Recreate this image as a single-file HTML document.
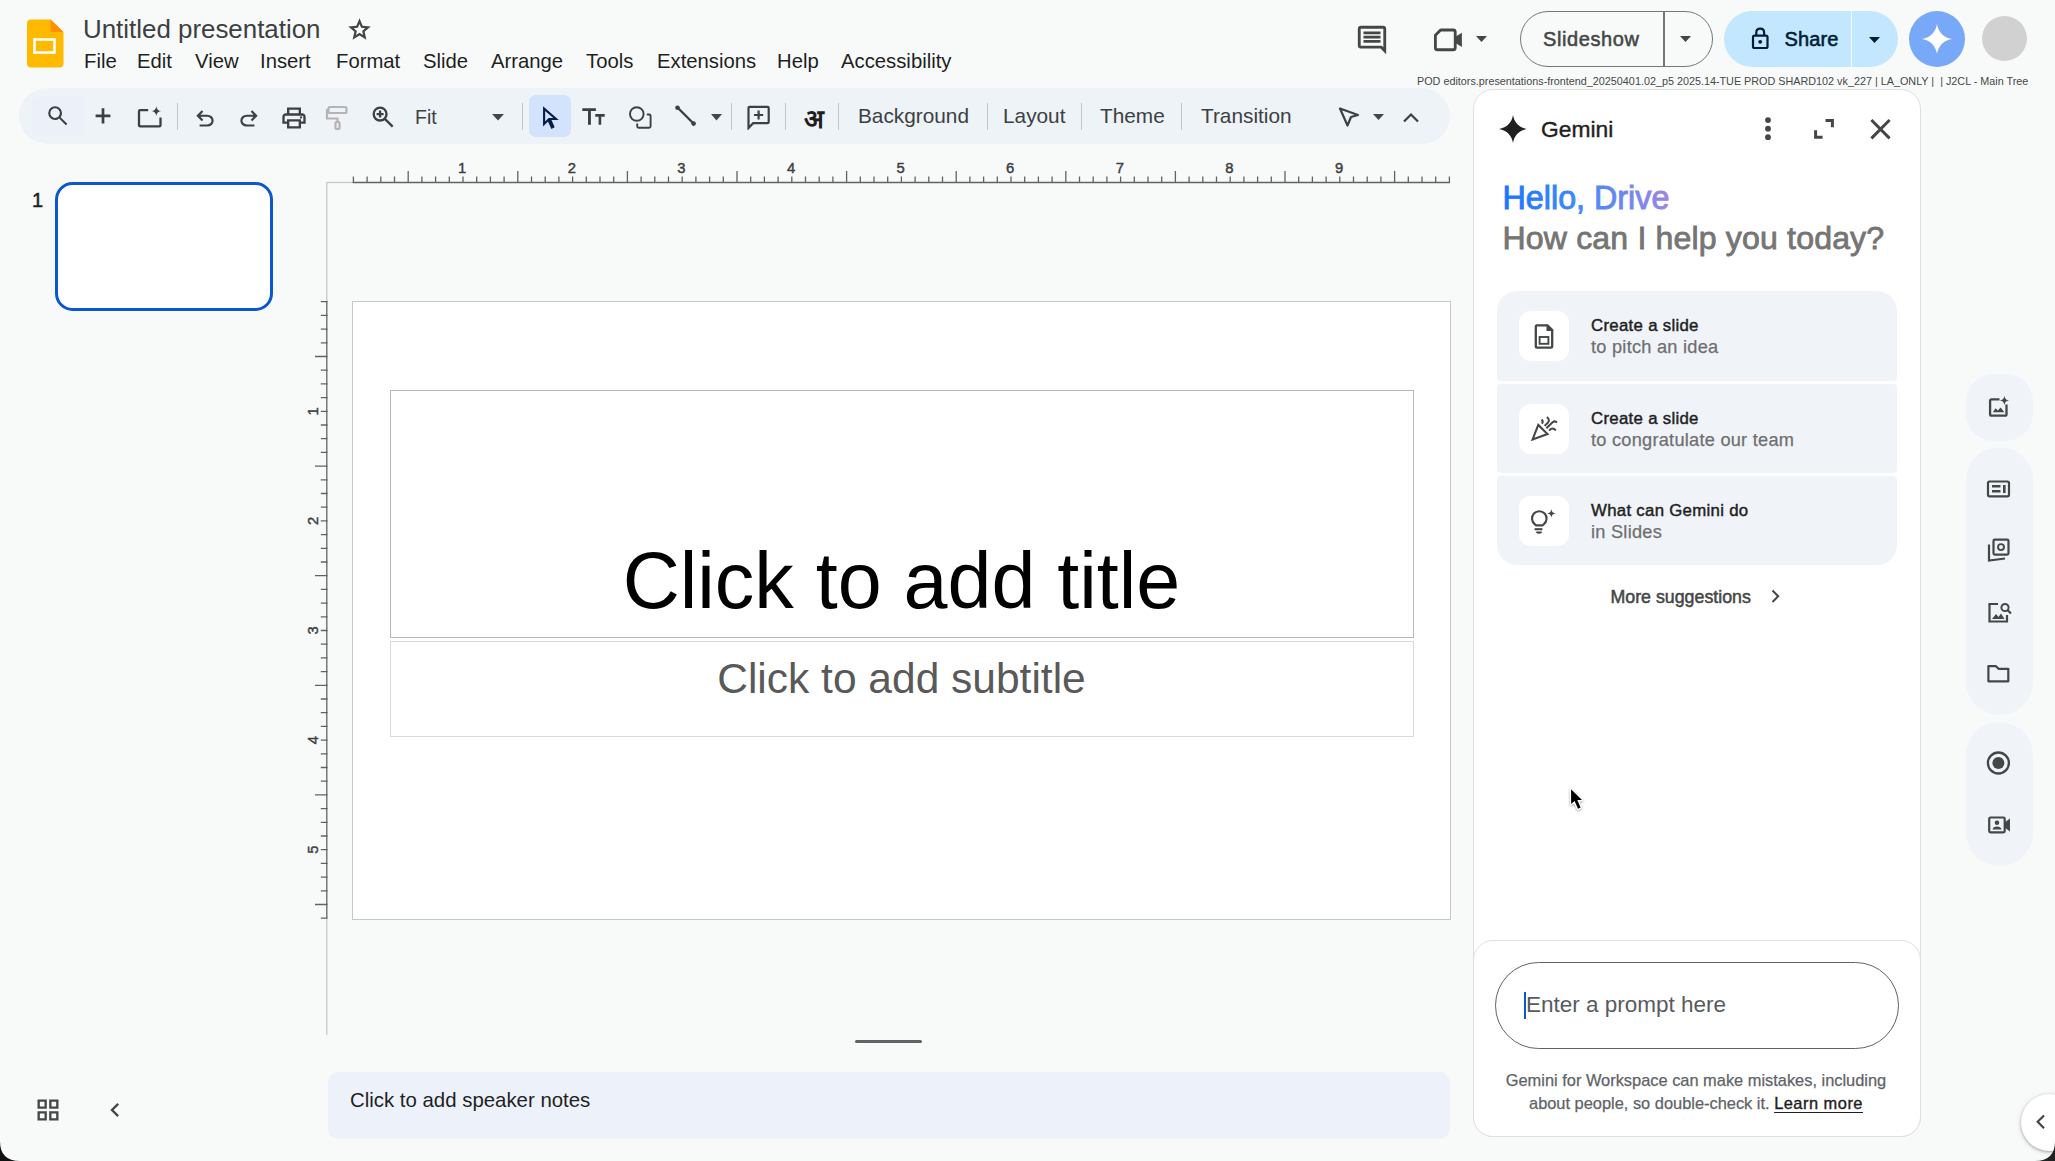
<!DOCTYPE html>
<html><head><meta charset="utf-8">
<style>
html,body{margin:0;padding:0;}
body{width:2055px;height:1161px;overflow:hidden;position:relative;background:#f8faf9;font-family:"Liberation Sans",sans-serif;color:#1f1f1f;}
.a{position:absolute;}
.t{position:absolute;white-space:nowrap;line-height:1;}
svg{position:absolute;display:block;}
.sep{position:absolute;width:1.3px;height:27px;top:103px;background:#c4c7c5;}
</style></head><body>

<!-- ===== HEADER ===== -->
<svg style="left:27px;top:19px" width="37" height="49" viewBox="0 0 37 49">
  <path d="M4 0.5H23.5L36.5 13V44.5Q36.5 48.5 32.5 48.5H4Q0 48.5 0 44.5V4.5Q0 0.5 4 0.5Z" fill="#ffba00"/>
  <path d="M23.5 0.5L36.5 13H23.5Z" fill="#ff8f00"/>
  <rect x="7.5" y="20.5" width="20" height="13" fill="none" stroke="#fff" stroke-width="2.6"/>
</svg>
<div class="t" id="title" style="left:83px;top:17px;font-size:25.9px;color:#3c4043;">Untitled presentation</div>
<svg style="left:346px;top:16px" width="27" height="27" viewBox="0 -960 960 960"><path fill="#444746" d="m354-287 126-76 126 77-33-144 111-96-146-13-58-136-58 135-146 13 111 97-33 143ZM233-120l65-281L80-590l288-25 112-265 112 265 288 25-218 189 65 281-247-149-247 149Zm247-350Z"/></svg>

<div class="t" style="left:84px;top:51px;font-size:20.3px;">File</div>
<div class="t" style="left:137px;top:51px;font-size:20.3px;">Edit</div>
<div class="t" style="left:195px;top:51px;font-size:20.3px;">View</div>
<div class="t" style="left:260px;top:51px;font-size:20.3px;">Insert</div>
<div class="t" style="left:336px;top:51px;font-size:20.3px;">Format</div>
<div class="t" style="left:423px;top:51px;font-size:20.3px;">Slide</div>
<div class="t" style="left:491px;top:51px;font-size:20.3px;">Arrange</div>
<div class="t" style="left:586px;top:51px;font-size:20.3px;">Tools</div>
<div class="t" style="left:657px;top:51px;font-size:20.3px;">Extensions</div>
<div class="t" style="left:777px;top:51px;font-size:20.3px;">Help</div>
<div class="t" style="left:841px;top:51px;font-size:20.3px;">Accessibility</div>

<!-- top right -->
<svg style="left:1355px;top:23px" width="34" height="34" viewBox="0 0 24 24"><path fill="#444746" d="M22 4c0-1.1-.9-2-2-2H4c-1.1 0-2 .9-2 2v12c0 1.1.9 2 2 2h14l4 4V4zm-2 13.17L18.83 16H4V4h16v13.17zM6 12h12v2H6zm0-3h12v2H6zm0-3h12v2H6z"/></svg>
<svg style="left:1431px;top:22px" width="34" height="34" viewBox="0 0 24 24"><path fill="none" stroke="#444746" stroke-width="2" stroke-linejoin="round" d="M3.1 9.3L6.8 5.64H15.6Q17.1 5.64 17.1 7.1V18.1Q17.1 19.6 15.6 19.6H4.6Q3.1 19.6 3.1 18.1Z"/><path fill="#444746" d="M17 10.6L21.8 7.55V17.6L17 14.6Z"/></svg>
<svg style="left:1476px;top:36px" width="12" height="7" viewBox="0 0 12 7"><path d="M0 0H11L5.5 6Z" fill="#444746"/></svg>

<div class="a" style="left:1520px;top:11px;width:191px;height:54px;border:1.5px solid #747775;border-radius:28px;"></div>
<div class="a" style="left:1663px;top:12px;width:1.5px;height:54px;background:#747775;"></div>
<div class="t" style="left:1543px;top:28.5px;font-size:20px;letter-spacing:0.6px;color:#444746;-webkit-text-stroke:0.55px #444746;">Slideshow</div>
<svg style="left:1680px;top:36px" width="12" height="7" viewBox="0 0 12 7"><path d="M0 0H11L5.5 6Z" fill="#444746"/></svg>

<div class="a" style="left:1724px;top:11px;width:174px;height:56px;background:#c2e7ff;border-radius:28px;"></div>
<div class="a" style="left:1851px;top:11px;width:1.2px;height:56px;background:#f8faf9;"></div>
<svg style="left:1748px;top:25px" width="24" height="26" viewBox="0 0 24 26"><rect x="5" y="10.6" width="14.5" height="12.4" rx="1.5" fill="none" stroke="#001d35" stroke-width="2.2"/><path d="M8.3 10.6V7.4Q8.3 3.6 12.2 3.6Q16.1 3.6 16.1 7.4V10.6" fill="none" stroke="#001d35" stroke-width="2.2"/><circle cx="12.2" cy="16.8" r="1.9" fill="#001d35"/></svg>
<div class="t" style="left:1784.5px;top:28.5px;font-size:20px;letter-spacing:0.15px;color:#001d35;-webkit-text-stroke:0.55px #001d35;">Share</div>
<svg style="left:1869px;top:37px" width="12" height="7" viewBox="0 0 12 7"><path d="M0 0H11L5.5 6Z" fill="#001d35"/></svg>

<div class="a" style="left:1909px;top:11px;width:56px;height:56px;border-radius:50%;background:#78a9f9;"></div>
<svg style="left:1922px;top:24px" width="30" height="30" viewBox="0 0 30 30"><path d="M15 0C16.3 8 21.4 13.5 30 15C21.4 16.5 16.3 22 15 30C13.7 22 8.6 16.5 0 15C8.6 13.5 13.7 8 15 0Z" fill="#fff"/></svg>
<div class="a" style="left:1982px;top:16px;width:45px;height:45px;border-radius:50%;background:#d1d1d1;"></div>

<div class="t" style="left:1417px;top:75.5px;font-size:10.8px;color:#474747;">POD editors.presentations-frontend_20250401.02_p5 2025.14-TUE PROD SHARD102 vk_227 | LA_ONLY |&nbsp; | J2CL - Main Tree</div>

<!-- ===== TOOLBAR ===== -->
<div class="a" style="left:19px;top:88px;width:1431px;height:56px;border-radius:28px;background:#eef3f8;"></div>


<!-- toolbar icons -->
<div class="a" style="left:32px;top:97px;width:51.5px;height:38.5px;border-radius:4px;background:#ecf1f9;"></div>
<svg style="left:44.5px;top:103px" width="25.5" height="25.5" viewBox="0 -960 960 960"><path fill="#3c4043" d="M784-120 532-372q-30 24-69 38t-83 14q-109 0-184.5-75.5T120-580q0-109 75.5-184.5T380-840q109 0 184.5 75.5T640-580q0 44-14 83t-38 69l252 252-56 56ZM380-400q75 0 127.5-52.5T560-580q0-75-52.5-127.5T380-760q-75 0-127.5 52.5T200-580q0 75 52.5 127.5T380-400Z"/></svg>
<svg style="left:90px;top:103px" width="26" height="26" viewBox="0 0 26 26"><path d="M13 5.2V20.6M5.6 12.9H20.4" stroke="#3c4043" stroke-width="2.7" fill="none"/></svg>
<svg style="left:135px;top:103px" width="30" height="28" viewBox="0 0 30 28"><path fill="none" stroke="#3c4043" stroke-width="2.3" stroke-linejoin="round" d="M13.2 7.1H5.2Q4 7.1 4 8.3V22.2Q4 23.4 5.2 23.4H24.3Q25.5 23.4 25.5 22.2V14.6"/><path fill="#3c4043" d="M21.3 3.2C21.7 6.2 23.3 7.7 26.1 8.1C23.3 8.5 21.7 10 21.3 13C20.9 10 19.3 8.5 16.5 8.1C19.3 7.7 20.9 6.2 21.3 3.2Z"/></svg>
<div class="sep" style="left:177px;"></div>
<svg style="left:192px;top:106px" width="26" height="26" viewBox="0 -960 960 960"><path fill="#3c4043" d="M280-200v-80h284q63 0 109.5-40T720-420q0-60-46.5-100T564-560H312l104 104-56 56-200-200 200-200 56 56-104 104h252q97 0 166.5 63T800-420q0 94-69.5 157T564-200H280Z"/></svg>
<svg style="left:236px;top:106px" width="26" height="26" viewBox="0 -960 960 960"><path fill="#3c4043" d="M396-200q-97 0-166.5-63T160-420q0-94 69.5-157T396-640h252L544-744l56-56 200 200-200 200-56-56 104-104H396q-63 0-109.5 40T240-420q0 60 46.5 100T396-280h284v80H396Z"/></svg>
<svg style="left:280px;top:104px" width="28" height="28" viewBox="0 -960 960 960"><path fill="#3c4043" d="M640-640v-120H320v120h-80v-200h480v200h-80Zm-480 80h640-640Zm560 100q17 0 28.5-11.5T760-500q0-17-11.5-28.5T720-540q-17 0-28.5 11.5T680-500q0 17 11.5 28.5T720-460Zm-80 260v-160H320v160h320Zm80 80H240v-160H80v-240q0-51 35-85.5t85-34.5h560q51 0 85.5 34.5T880-520v240H720v160Zm80-240v-160q0-17-11.5-28.5T760-560H200q-17 0-28.5 11.5T160-520v160h80v-80h480v80h80Z"/></svg>
<svg style="left:324px;top:103px" width="28" height="28" viewBox="0 0 28 28"><g fill="none" stroke="#b4b4b4" stroke-width="2.2"><rect x="4.5" y="4" width="18" height="6" rx="1.5"/><path d="M4.5 7H3V15.5H13.5V19"/><rect x="11.5" y="19" width="4" height="7" rx="1"/></g></svg>
<svg style="left:369px;top:103px" width="28" height="28" viewBox="0 -960 960 960"><path fill="#3c4043" d="M784-120 532-372q-30 24-69 38t-83 14q-109 0-184.5-75.5T120-580q0-109 75.5-184.5T380-840q109 0 184.5 75.5T640-580q0 44-14 83t-38 69l252 252-56 56ZM380-400q75 0 127.5-52.5T560-580q0-75-52.5-127.5T380-760q-75 0-127.5 52.5T200-580q0 75 52.5 127.5T380-400Zm-40-60v-80h-80v-80h80v-80h80v80h80v80h-80v80h-80Z"/></svg>
<div class="t" style="left:415px;top:107.5px;font-size:19.5px;color:#3c4043;">Fit</div>
<svg style="left:492px;top:114px" width="12" height="7" viewBox="0 0 12 7"><path d="M0 0H12L6 6.5Z" fill="#444746"/></svg>
<div class="sep" style="left:522px;"></div>
<div class="a" style="left:529px;top:95px;width:42px;height:42px;border-radius:7px;background:#d3e3fd;"></div>
<svg style="left:541px;top:105px" width="20" height="26" viewBox="0 0 20 26"><path d="M3.1 3.6V19L7.3 14.7L10.9 22.5L12.3 21.8L8.9 14H15Z" fill="none" stroke="#041e49" stroke-width="2.1" stroke-linejoin="miter"/></svg>
<svg style="left:581px;top:106px" width="26" height="20" viewBox="0 0 26 20"><path d="M1.3 2.3H14.9V5.1H9.9V18.7H7V5.1H1.3ZM14.3 8H23.7V10.8H20.2V18.7H17.6V10.8H14.3Z" fill="#3c4043"/></svg>
<svg style="left:628px;top:105px" width="26" height="25" viewBox="0 0 26 25"><circle cx="8.8" cy="9" r="6.8" fill="none" stroke="#3c4043" stroke-width="1.9"/><path d="M19.6 9.5H21.1Q22.6 9.5 22.6 11V21.2Q22.6 22.7 21.1 22.7H10.7Q9.2 22.7 9.2 21.2V19.1" fill="none" stroke="#3c4043" stroke-width="1.9" stroke-linecap="round"/></svg>
<svg style="left:674px;top:105px" width="24" height="22" viewBox="0 0 24 22"><path d="M3.5 2.5L19.5 18.5" stroke="#3c4043" stroke-width="2.4"/><circle cx="3.5" cy="2.8" r="2.3" fill="#3c4043"/><circle cx="19.6" cy="18.6" r="2.3" fill="#3c4043"/></svg>
<svg style="left:711px;top:114px" width="12" height="7" viewBox="0 0 12 7"><path d="M0 0H11L5.5 6.5Z" fill="#444746"/></svg>
<div class="sep" style="left:731px;"></div>
<svg style="left:746px;top:105px" width="26" height="25" viewBox="0 0 26 25"><path fill="none" stroke="#3c4043" stroke-width="2.2" d="M2.5 23V3Q2.5 1.8 3.7 1.8H21.5Q22.7 1.8 22.7 3V17Q22.7 18.2 21.5 18.2H7.2Z"/><path d="M12.6 5.5V14.5M8 10H17.2" stroke="#3c4043" stroke-width="2.2"/></svg>
<div class="sep" style="left:785px;"></div>
<div class="t" style="left:803.5px;top:105.5px;font-size:26px;font-weight:bold;color:#1f1f1f;">अ</div>
<div class="sep" style="left:838px;"></div>
<div class="t" style="left:858px;top:106px;font-size:20.8px;color:#3c4043;">Background</div>
<div class="sep" style="left:987px;"></div>
<div class="t" style="left:1003px;top:106px;font-size:20.8px;color:#3c4043;">Layout</div>
<div class="sep" style="left:1081px;"></div>
<div class="t" style="left:1100px;top:106px;font-size:20.8px;color:#3c4043;">Theme</div>
<div class="sep" style="left:1181px;"></div>
<div class="t" style="left:1201px;top:106px;font-size:20.8px;color:#3c4043;">Transition</div>
<svg style="left:1337px;top:106px" width="24" height="23" viewBox="0 0 24 23"><path fill="none" stroke="#3c4043" stroke-width="2.2" stroke-linejoin="round" d="M3 2.5L21 9L14 11L10.5 19.5Z"/></svg>
<svg style="left:1373px;top:114px" width="12" height="7" viewBox="0 0 12 7"><path d="M0 0H11L5.5 6Z" fill="#444746"/></svg>
<svg style="left:1402px;top:112px" width="18" height="11" viewBox="0 0 18 11"><path d="M2 9.5L9 2.5L16 9.5" fill="none" stroke="#3c4043" stroke-width="2.2"/></svg>


<!-- ===== FILMSTRIP ===== -->
<div class="t" style="left:32px;top:189.5px;font-size:20px;color:#1f1f1f;-webkit-text-stroke:0.5px #1f1f1f;">1</div>
<div class="a" style="left:55px;top:182px;width:212px;height:122.5px;border:3px solid #0b57d0;border-radius:17.5px;background:#fff;"></div>

<!-- ===== SLIDE ===== -->
<div class="a" style="left:352px;top:300.5px;width:1097.3px;height:617.3px;background:#fff;border:1px solid #c7c7c7;"></div>
<div class="a" style="left:389.5px;top:390px;width:1022.5px;height:245.5px;border:1px solid #b8b8b8;"></div>
<div class="a" style="left:389.5px;top:640.5px;width:1022.5px;height:94.5px;border:1px solid #dadada;"></div>
<div class="t" style="left:389px;width:1025px;text-align:center;top:540.5px;font-size:79px;color:#000;">Click to add title</div>
<div class="t" style="left:389px;width:1025px;text-align:center;top:658px;font-size:42.5px;color:#595959;">Click to add subtitle</div>

<!-- notes handle -->
<div class="a" style="left:855px;top:1040px;width:67px;height:3px;border-radius:2px;background:#5f6368;"></div>
<div class="a" style="left:327.5px;top:1071.5px;width:1122.5px;height:67px;border-radius:11px;background:#edf2fa;"></div>
<div class="t" style="left:350px;top:1090px;font-size:20.4px;color:#1f1f1f;">Click to add speaker notes</div>

<svg style="left:34px;top:1096px" width="28" height="28" viewBox="0 -960 960 960"><path fill="#444746" d="M120-520v-320h320v320H120Zm0 400v-320h320v320H120Zm400-400v-320h320v320H520Zm0 400v-320h320v320H520ZM200-600h160v-160H200v160Zm400 0h160v-160H600v160Zm0 400h160v-160H600v160Zm-400 0h160v-160H200v160Z"/></svg>
<svg style="left:101px;top:1096px" width="28" height="28" viewBox="0 -960 960 960"><path fill="#444746" d="M560-240 320-480l240-240 56 56-184 184 184 184-56 56Z"/></svg>

<!-- RULERS -->
<svg style="left:320px;top:150px" width="1140" height="40" viewBox="0 0 1140 40">
<path d="M6.399999999999977 32.5H33.39999999999998" stroke="#c7c7c7" stroke-width="1.3" fill="none"/>
<path d="M32.799999999999976 32.5H1130.0" stroke="#5f6368" stroke-width="1.3" fill="none"/>
<path d="M33.40 26.5V32.900000000000006M47.10 26.5V32.900000000000006M60.80 26.5V32.900000000000006M74.50 26.5V32.900000000000006M88.20 21V32.900000000000006M101.90 26.5V32.900000000000006M115.60 26.5V32.900000000000006M129.30 26.5V32.900000000000006M143.00 26.5V32.900000000000006M156.70 26.5V32.900000000000006M170.40 26.5V32.900000000000006M184.10 26.5V32.900000000000006M197.80 21V32.900000000000006M211.50 26.5V32.900000000000006M225.20 26.5V32.900000000000006M238.90 26.5V32.900000000000006M252.60 26.5V32.900000000000006M266.30 26.5V32.900000000000006M280.00 26.5V32.900000000000006M293.70 26.5V32.900000000000006M307.40 21V32.900000000000006M321.10 26.5V32.900000000000006M334.80 26.5V32.900000000000006M348.50 26.5V32.900000000000006M362.20 26.5V32.900000000000006M375.90 26.5V32.900000000000006M389.60 26.5V32.900000000000006M403.30 26.5V32.900000000000006M417.00 21V32.900000000000006M430.70 26.5V32.900000000000006M444.40 26.5V32.900000000000006M458.10 26.5V32.900000000000006M471.80 26.5V32.900000000000006M485.50 26.5V32.900000000000006M499.20 26.5V32.900000000000006M512.90 26.5V32.900000000000006M526.60 21V32.900000000000006M540.30 26.5V32.900000000000006M554.00 26.5V32.900000000000006M567.70 26.5V32.900000000000006M581.40 26.5V32.900000000000006M595.10 26.5V32.900000000000006M608.80 26.5V32.900000000000006M622.50 26.5V32.900000000000006M636.20 21V32.900000000000006M649.90 26.5V32.900000000000006M663.60 26.5V32.900000000000006M677.30 26.5V32.900000000000006M691.00 26.5V32.900000000000006M704.70 26.5V32.900000000000006M718.40 26.5V32.900000000000006M732.10 26.5V32.900000000000006M745.80 21V32.900000000000006M759.50 26.5V32.900000000000006M773.20 26.5V32.900000000000006M786.90 26.5V32.900000000000006M800.60 26.5V32.900000000000006M814.30 26.5V32.900000000000006M828.00 26.5V32.900000000000006M841.70 26.5V32.900000000000006M855.40 21V32.900000000000006M869.10 26.5V32.900000000000006M882.80 26.5V32.900000000000006M896.50 26.5V32.900000000000006M910.20 26.5V32.900000000000006M923.90 26.5V32.900000000000006M937.60 26.5V32.900000000000006M951.30 26.5V32.900000000000006M965.00 21V32.900000000000006M978.70 26.5V32.900000000000006M992.40 26.5V32.900000000000006M1006.10 26.5V32.900000000000006M1019.80 26.5V32.900000000000006M1033.50 26.5V32.900000000000006M1047.20 26.5V32.900000000000006M1060.90 26.5V32.900000000000006M1074.60 21V32.900000000000006M1088.30 26.5V32.900000000000006M1102.00 26.5V32.900000000000006M1115.70 26.5V32.900000000000006M1129.40 26.5V32.900000000000006" stroke="#5f6368" stroke-width="1.3" fill="none"/>
<g font-family="Liberation Sans" font-size="14.8" fill="#3c4043" stroke="#3c4043" stroke-width="0.45"><text x="142.20" y="22.80000000000001" text-anchor="middle">1</text><text x="251.80" y="22.80000000000001" text-anchor="middle">2</text><text x="361.40" y="22.80000000000001" text-anchor="middle">3</text><text x="471.00" y="22.80000000000001" text-anchor="middle">4</text><text x="580.60" y="22.80000000000001" text-anchor="middle">5</text><text x="690.20" y="22.80000000000001" text-anchor="middle">6</text><text x="799.80" y="22.80000000000001" text-anchor="middle">7</text><text x="909.40" y="22.80000000000001" text-anchor="middle">8</text><text x="1019.00" y="22.80000000000001" text-anchor="middle">9</text></g>
</svg>
<svg style="left:290px;top:170px" width="50" height="880" viewBox="0 0 50 880">
<path d="M36.80000000000001 12.5V131.7M36.80000000000001 748.3V864.8" stroke="#c7c7c7" stroke-width="1.3" fill="none"/>
<path d="M36.80000000000001 131.1V748.3" stroke="#5f6368" stroke-width="1.3" fill="none"/>
<path d="M30.80000000000001 131.70H37.5M30.80000000000001 145.40H37.5M30.80000000000001 159.10H37.5M30.80000000000001 172.80H37.5M25 186.50H37.5M30.80000000000001 200.20H37.5M30.80000000000001 213.90H37.5M30.80000000000001 227.60H37.5M30.80000000000001 241.30H37.5M30.80000000000001 255.00H37.5M30.80000000000001 268.70H37.5M30.80000000000001 282.40H37.5M25 296.10H37.5M30.80000000000001 309.80H37.5M30.80000000000001 323.50H37.5M30.80000000000001 337.20H37.5M30.80000000000001 350.90H37.5M30.80000000000001 364.60H37.5M30.80000000000001 378.30H37.5M30.80000000000001 392.00H37.5M25 405.70H37.5M30.80000000000001 419.40H37.5M30.80000000000001 433.10H37.5M30.80000000000001 446.80H37.5M30.80000000000001 460.50H37.5M30.80000000000001 474.20H37.5M30.80000000000001 487.90H37.5M30.80000000000001 501.60H37.5M25 515.30H37.5M30.80000000000001 529.00H37.5M30.80000000000001 542.70H37.5M30.80000000000001 556.40H37.5M30.80000000000001 570.10H37.5M30.80000000000001 583.80H37.5M30.80000000000001 597.50H37.5M30.80000000000001 611.20H37.5M25 624.90H37.5M30.80000000000001 638.60H37.5M30.80000000000001 652.30H37.5M30.80000000000001 666.00H37.5M30.80000000000001 679.70H37.5M30.80000000000001 693.40H37.5M30.80000000000001 707.10H37.5M30.80000000000001 720.80H37.5M25 734.50H37.5M30.80000000000001 748.20H37.5" stroke="#5f6368" stroke-width="1.3" fill="none"/>
<g font-family="Liberation Sans" font-size="14.8" fill="#3c4043" stroke="#3c4043" stroke-width="0.45"><text transform="translate(28.399999999999977 241.30) rotate(-90)" text-anchor="middle">1</text><text transform="translate(28.399999999999977 350.90) rotate(-90)" text-anchor="middle">2</text><text transform="translate(28.399999999999977 460.50) rotate(-90)" text-anchor="middle">3</text><text transform="translate(28.399999999999977 570.10) rotate(-90)" text-anchor="middle">4</text><text transform="translate(28.399999999999977 679.70) rotate(-90)" text-anchor="middle">5</text></g>
</svg>
<!-- /RULERS -->

<!-- ===== GEMINI PANEL ===== -->
<div class="a" style="left:1473px;top:88.5px;width:445.5px;height:1046.7px;border:1.4px solid #dedfdf;border-radius:20px;background:#fff;"></div>
<svg style="left:1499px;top:115px" width="28" height="28" viewBox="0 0 28 28"><path d="M14 0C15.2 7.5 20 12.6 28 14C20 15.4 15.2 20.5 14 28C12.8 20.5 8 15.4 0 14C8 12.6 12.8 7.5 14 0Z" fill="#1f1f1f"/></svg>
<div class="t" style="left:1541px;top:117.5px;font-size:22.8px;color:#1f1f1f;-webkit-text-stroke:0.4px #1f1f1f;">Gemini</div>
<svg style="left:1762px;top:114px" width="12" height="28" viewBox="0 0 12 28"><circle cx="6" cy="6.1" r="2.9" fill="#444746"/><circle cx="6" cy="14.7" r="2.9" fill="#444746"/><circle cx="6" cy="23.2" r="2.9" fill="#444746"/></svg>
<svg style="left:1810px;top:115px" width="28" height="28" viewBox="0 0 28 28"><path d="M15.5 5.4H22.4V12.3M5.6 15.3V22.2H12.6" fill="none" stroke="#444746" stroke-width="3"/></svg>
<svg style="left:1866px;top:115px" width="28" height="28" viewBox="0 0 28 28"><path d="M5.4 5L23.6 23.4M23.6 5L5.4 23.4" fill="none" stroke="#444746" stroke-width="3"/></svg>

<svg style="left:1494px;top:174px" width="200" height="45" viewBox="0 0 200 45"><defs><linearGradient id="hg" x1="0" y1="0" x2="1" y2="0"><stop offset="0" stop-color="#1a75ff"/><stop offset="0.45" stop-color="#3f8af6"/><stop offset="0.75" stop-color="#6f87ee"/><stop offset="1" stop-color="#9c85e6"/></linearGradient></defs><text x="8.5" y="34.6" font-family="Liberation Sans" font-size="32.3" fill="url(#hg)" stroke="url(#hg)" stroke-width="0.9">Hello, Drive</text></svg>
<div class="t" style="left:1502.5px;top:221.7px;font-size:32.1px;letter-spacing:0.15px;color:#757575;-webkit-text-stroke:0.8px #757575;">How can I help you today?</div>

<!-- cards -->
<div class="a" style="left:1497px;top:291.2px;width:399.5px;height:89.4px;background:#f0f4f9;border-radius:20px 20px 4px 4px;"></div>
<div class="a" style="left:1497px;top:384px;width:399.5px;height:89.2px;background:#f0f4f9;border-radius:4px;"></div>
<div class="a" style="left:1497px;top:476.3px;width:399.5px;height:89.1px;background:#f0f4f9;border-radius:4px 4px 20px 20px;"></div>
<div class="a" style="left:1519px;top:310.8px;width:50.2px;height:50.2px;background:#fff;border-radius:12px;"></div>
<div class="a" style="left:1519px;top:403.5px;width:50.2px;height:50.2px;background:#fff;border-radius:12px;"></div>
<div class="a" style="left:1519px;top:496px;width:50.2px;height:50.2px;background:#fff;border-radius:12px;"></div>

<svg style="left:1532px;top:322px" width="24" height="28" viewBox="0 0 24 28"><path d="M4 3.3H15.5L20.2 8V24.5Q20.2 25.7 19 25.7H5Q3.8 25.7 3.8 24.5V4.5Q3.8 3.3 5 3.3Z" fill="none" stroke="#444746" stroke-width="2.3"/><path d="M14.5 2.2L21.3 9H14.5Z" fill="#444746"/><rect x="7.6" y="15" width="8.8" height="6.8" fill="none" stroke="#444746" stroke-width="1.9"/></svg>

<svg style="left:1530px;top:414px" width="30" height="28" viewBox="0 0 30 28"><path d="M8.3 10.9L2.6 25.4L17.5 20.1Z" fill="none" stroke="#444746" stroke-width="2.1" stroke-linejoin="miter"/><path d="M11.6 5.4Q13.7 7.3 11.9 9.7M16.8 3.1Q20.5 5.8 17.8 8.7L14.6 11.9M16.4 14.3L22.6 8.2Q25 6.3 27 8.6M19.1 16.6Q22.2 12.4 25.9 16.4" fill="none" stroke="#444746" stroke-width="2"/></svg>

<svg style="left:1529px;top:507px" width="30" height="30" viewBox="0 0 30 30"><path d="M5.9 17.3A7.3 7.3 0 1 1 14.7 17.3L13.7 18.4H6.9Z" fill="none" stroke="#444746" stroke-width="2.1" stroke-linejoin="round"/><path d="M5.6 22.2H13.4" stroke="#444746" stroke-width="2.1"/><path d="M7.6 25.2H12.4Q10 27.2 7.6 25.2Z" fill="#444746" stroke="#444746" stroke-width="1.2" stroke-linejoin="round"/><path d="M22.4 2C22.9 5.1 23.7 5.9 26.8 6.4C23.7 6.9 22.9 7.7 22.4 10.8C21.9 7.7 21.1 6.9 18 6.4C21.1 5.9 21.9 5.1 22.4 2Z" fill="#444746"/></svg>

<div class="t" style="left:1591px;top:318px;font-size:16.8px;letter-spacing:0.3px;color:#1f1f1f;-webkit-text-stroke:0.45px #1f1f1f;">Create a slide</div>
<div class="t" style="left:1591px;top:337.5px;font-size:18.2px;letter-spacing:0.25px;color:#6f6f6f;-webkit-text-stroke:0.25px #6f6f6f;">to pitch an idea</div>
<div class="t" style="left:1591px;top:411px;font-size:16.8px;letter-spacing:0.3px;color:#1f1f1f;-webkit-text-stroke:0.45px #1f1f1f;">Create a slide</div>
<div class="t" style="left:1591px;top:430.5px;font-size:18.2px;letter-spacing:0.25px;color:#6f6f6f;-webkit-text-stroke:0.25px #6f6f6f;">to congratulate our team</div>
<div class="t" style="left:1591px;top:503px;font-size:16.8px;letter-spacing:0.3px;color:#1f1f1f;-webkit-text-stroke:0.45px #1f1f1f;">What can Gemini do</div>
<div class="t" style="left:1591px;top:522.5px;font-size:18.2px;letter-spacing:0.25px;color:#6f6f6f;-webkit-text-stroke:0.25px #6f6f6f;">in Slides</div>

<div class="t" style="left:1610.5px;top:589px;font-size:17.8px;color:#444746;-webkit-text-stroke:0.5px #444746;">More suggestions</div>
<svg style="left:1766px;top:585px" width="20" height="22" viewBox="0 0 20 22"><path d="M6.5 5.5L12.2 11.2L6.5 17" fill="none" stroke="#444746" stroke-width="2"/></svg>

<!-- prompt section -->
<div class="a" style="left:1473px;top:940px;width:445.5px;height:195.2px;border:1.4px solid #dedfdf;border-radius:20px;background:#fff;"></div>
<div class="a" style="left:1495px;top:962px;width:401.5px;height:84.5px;border:1.5px solid #5f6368;border-radius:44px;"></div>
<div class="a" style="left:1524px;top:992px;width:1.6px;height:27px;background:#0b57d0;"></div>
<div class="t" style="left:1526px;top:994px;font-size:22.5px;color:#575b5f;">Enter a prompt here</div>
<div class="t" style="left:1473px;width:446px;text-align:center;top:1069px;font-size:16.4px;color:#5f6368;line-height:23px;white-space:normal;-webkit-text-stroke:0.25px #5f6368;">Gemini for Workspace can make mistakes, including<br>about people, so double-check it. <span style="color:#1f1f1f;-webkit-text-stroke:0.4px #1f1f1f;letter-spacing:0.5px;text-decoration:underline;text-underline-offset:3px;">Learn more</span></div>

<!-- ===== SIDE PANEL ===== -->
<div class="a" style="left:1965.5px;top:373.6px;width:67px;height:67.5px;border-radius:27px;background:#f0f4f9;"></div>
<div class="a" style="left:1965.5px;top:447.2px;width:67px;height:267.6px;border-radius:33.5px;background:#f0f4f9;"></div>
<div class="a" style="left:1965.5px;top:721.6px;width:67px;height:144.6px;border-radius:33.5px;background:#f0f4f9;"></div>

<svg style="left:1985px;top:394px" width="28" height="26" viewBox="0 0 28 26"><path d="M14.5 5.3H6.6Q5.1 5.3 5.1 6.8V20.2Q5.1 21.7 6.6 21.7H20Q21.5 21.7 21.5 20.2V10.6" fill="none" stroke="#444746" stroke-width="2.3"/><path d="M7.8 18.3L10.6 14.2L12.8 16.6L15.6 13.4L19.4 18.3Z" fill="#444746"/><path d="M19.4 1.8C19.9 4.9 21 6 24 6.5C21 7 19.9 8.1 19.4 11.2C18.9 8.1 17.8 7 14.8 6.5C17.8 6 18.9 4.9 19.4 1.8Z" fill="#444746"/></svg>
<svg style="left:1985px;top:477px" width="28" height="24" viewBox="0 0 28 24"><rect x="3" y="4.5" width="21" height="14.8" rx="1.5" fill="none" stroke="#444746" stroke-width="2.2"/><path d="M7 9.2H15.5M7 14.2H15.5M19.3 8V16" stroke="#444746" stroke-width="2.6"/></svg>
<svg style="left:1985px;top:536px" width="28" height="28" viewBox="0 0 28 28"><rect x="8.5" y="3.6" width="15" height="15" rx="1.3" fill="none" stroke="#444746" stroke-width="2.2"/><circle cx="16" cy="11.1" r="3" fill="none" stroke="#444746" stroke-width="1.9"/><path d="M4 8.5V24.5L20 22.5" fill="none" stroke="#444746" stroke-width="2.2"/></svg>
<svg style="left:1985px;top:600px" width="28" height="26" viewBox="0 0 28 26"><path d="M13 4H4.5V21.5H22V15" fill="none" stroke="#444746" stroke-width="2.2"/><path d="M7 19L11 14L13.5 17L16 13.5L19.5 19Z" fill="#444746"/><circle cx="20" cy="7.5" r="3.6" fill="none" stroke="#444746" stroke-width="2"/><path d="M22.5 10L26 13.5" stroke="#444746" stroke-width="2.2"/></svg>
<svg style="left:1985px;top:662px" width="28" height="24" viewBox="0 0 28 24"><path d="M3.4 4.2H11L13.5 6.8H23.3V19.3H3.4Z" fill="none" stroke="#444746" stroke-width="2.2" stroke-linejoin="round"/></svg>
<svg style="left:1985px;top:751px" width="28" height="26" viewBox="0 0 28 26"><circle cx="13.4" cy="12" r="10.5" fill="none" stroke="#444746" stroke-width="2.3"/><circle cx="13.4" cy="12" r="6" fill="#444746"/></svg>
<svg style="left:1985px;top:813px" width="28" height="24" viewBox="0 0 28 24"><rect x="4.2" y="4.5" width="15.5" height="14.8" rx="1.3" fill="none" stroke="#444746" stroke-width="2.2"/><circle cx="12" cy="9.8" r="2.3" fill="#444746"/><path d="M7.5 16.5Q8 13.5 12 13.5Q16 13.5 16.5 16.5Z" fill="#444746"/><path d="M19.5 9.5L25 5.5V18.5L19.5 14.5Z" fill="#444746"/></svg>

<!-- bottom right collapse circle -->
<div class="a" style="left:2020.8px;top:1093.5px;width:57px;height:57px;border-radius:50%;background:#fff;box-shadow:0 1px 3px rgba(0,0,0,0.3),0 1px 6px rgba(0,0,0,0.1);"></div>
<svg style="left:2032px;top:1110px" width="18" height="24" viewBox="0 0 18 24"><path d="M12 5.5L5.7 11.8L12 18.2" fill="none" stroke="#444746" stroke-width="2.2"/></svg>

<!-- screen corners -->
<svg style="left:0;top:1141px" width="20" height="20" viewBox="0 0 20 20"><path d="M0 0Q0 20 20 20H0Z" fill="#111"/></svg>
<svg style="left:2035px;top:1141px" width="20" height="20" viewBox="0 0 20 20"><path d="M20 0Q20 20 0 20H20Z" fill="#222"/></svg>

<!-- cursor -->
<svg style="left:1568px;top:786px;overflow:visible;filter:drop-shadow(0 1px 1.2px rgba(0,0,0,0.35))" width="20" height="26" viewBox="0 0 20 26"><path d="M3.1 3.2V17.9L6.6 15.1L10 22.7L12.6 21.6L9.3 14.1H14Z" fill="#000" stroke="#fff" stroke-width="2.6" stroke-linejoin="round" paint-order="stroke"/></svg>

</body></html>
